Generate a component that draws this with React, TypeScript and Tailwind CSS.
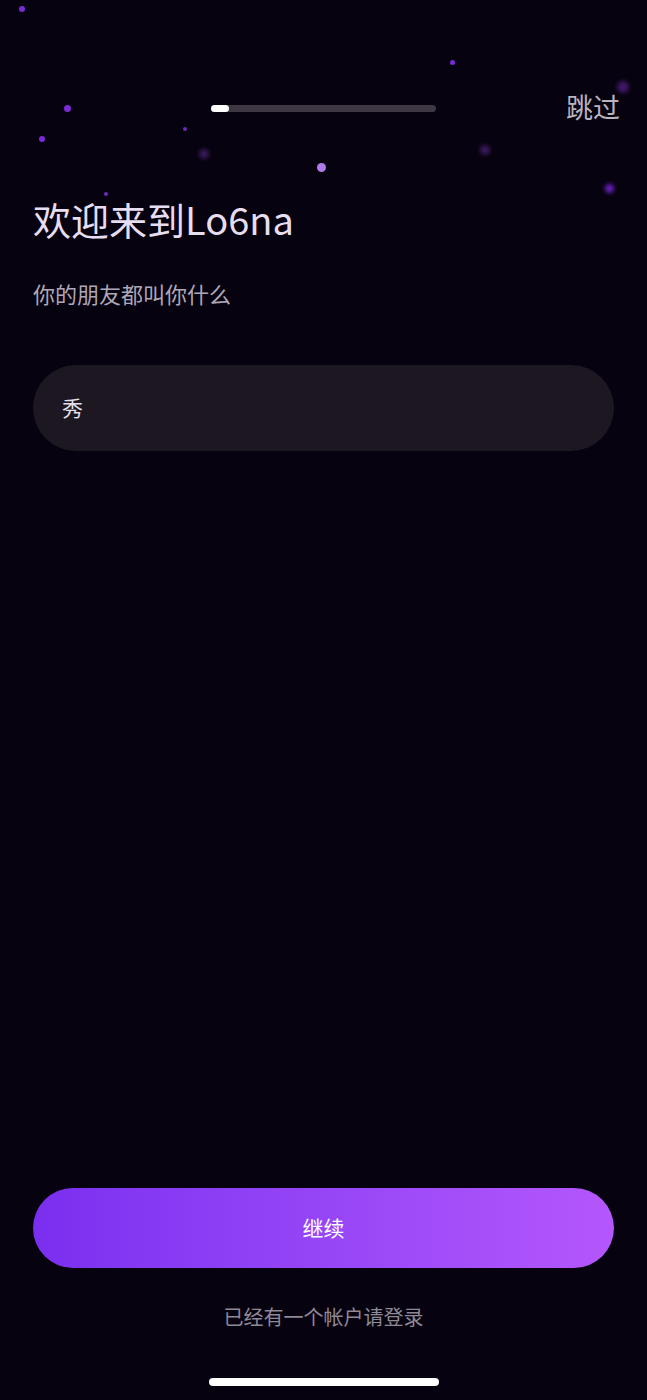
import React from 'react';

const stars = [
  { x: 22, y: 9, s: 6, c: 'bg-[#7a2bd6]', blur: false },
  { x: 67, y: 108, s: 7, c: 'bg-[#7a2bd6]', blur: false },
  { x: 42, y: 139, s: 6, c: 'bg-[#7a2bd6]', blur: false },
  { x: 185, y: 129, s: 4, c: 'bg-[#6a2bb8]', blur: false },
  { x: 106, y: 194, s: 4, c: 'bg-[#6a2bb8]', blur: false },
  { x: 204, y: 154, s: 10, c: 'bg-[#3a1a5c]', blur: true },
  { x: 321, y: 167, s: 9, c: 'bg-[#b07ae8]', blur: false },
  { x: 452, y: 62, s: 5, c: 'bg-[#7a2bd6]', blur: false },
  { x: 485, y: 150, s: 10, c: 'bg-[#3a1a5c]', blur: true },
  { x: 609, y: 188, s: 9, c: 'bg-[#6a20c0]', blur: true },
  { x: 623, y: 87, s: 12, c: 'bg-[#3d1866]', blur: true },
];

export default function App() {
  return (
    <div
      className="relative w-[647px] h-[1400px] overflow-hidden bg-[#07020f] flex flex-col px-[33px]"
      style={{ fontFamily: '"Noto Sans CJK SC", "Noto Sans", sans-serif' }}
    >
      {stars.map((st, i) => (
        <span
          key={i}
          className={`absolute rounded-full ${st.c} ${st.blur ? 'blur-[2px]' : ''}`}
          style={{ left: st.x - st.s / 2, top: st.y - st.s / 2, width: st.s, height: st.s }}
        />
      ))}

      <div className="relative h-[218px] flex items-start">
        <div className="absolute left-[178px] top-[105px] w-[225px] h-[7px] rounded-full bg-[#3d3842]">
          <div className="w-[18px] h-full rounded-full bg-white" />
        </div>
        <span className="absolute right-[-6px] top-[89px] text-[27px] leading-[36px] text-[#b9b4c0]">跳过</span>
        <h1 className="mt-[194px] text-[38px] leading-[50px] font-normal text-[#e6def0]">
          欢迎来到Lo6na
        </h1>
      </div>

      <p className="mt-[60px] text-[22px] leading-[30px] text-[#aea7b7]">你的朋友都叫你什么</p>

      <div className="mt-[57px] h-[86px] rounded-full bg-[#1c1720] flex items-center px-[29px]">
        <span className="text-[21px] text-[#e4e0ea]">秀</span>
      </div>

      <div className="flex-1" />

      <button className="h-[80px] rounded-full bg-gradient-to-r from-[#7a2ff0] to-[#b457fc] text-white text-[21px]">
        继续
      </button>

      <p className="mt-[34px] text-center text-[20px] leading-[30px] text-[#8f8897]">已经有一个帐户请登录</p>

      <div className="mt-[46px] mb-[14px] mx-auto w-[230px] h-[8px] rounded-full bg-white" />
    </div>
  );
}
